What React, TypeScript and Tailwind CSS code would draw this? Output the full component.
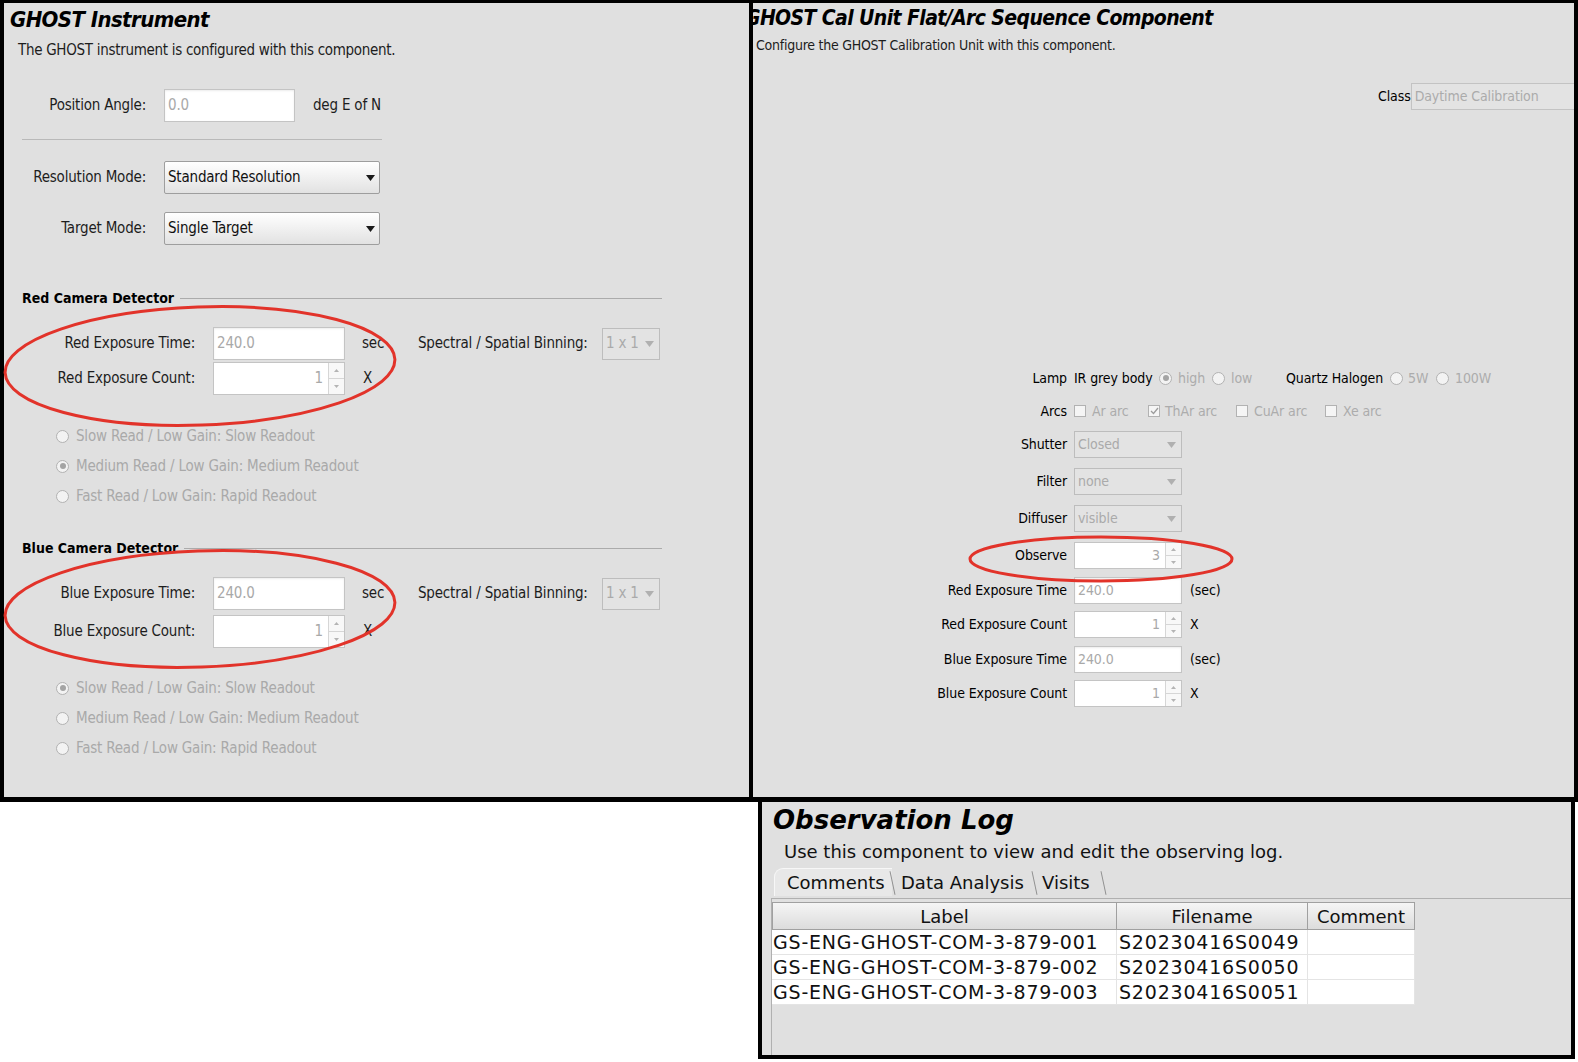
import React from "react";

const NARROW = "font-['DejaVu_Sans_Condensed','Liberation_Sans_Narrow','Liberation_Sans',sans-serif]";
const DEJAVU = "font-['DejaVu_Sans','Liberation_Sans',sans-serif]";

function Tri({ color }: { color: string }) {
  return (
    <svg width="9" height="6" viewBox="0 0 9 6">
      <path d="M0 0h9L4.5 6z" fill={color} />
    </svg>
  );
}

function TextBox({ value, className }: { value: string; className: string }) {
  return (
    <div
      className={`flex items-center bg-white border border-[#c4c4c4] shadow-[inset_0_1px_2px_rgba(0,0,0,0.08)] pl-[3px] text-[#a9a9a9] ${className}`}
    >
      {value}
    </div>
  );
}

function Spinner({ value, className }: { value: string; className: string }) {
  return (
    <div className={`flex bg-white border border-[#c4c4c4] ${className}`}>
      <div className="flex-1 flex items-center justify-end pr-[5px] text-[#a9a9a9]">{value}</div>
      <div className="w-[16px] flex flex-col border-l border-[#d6d6d6]">
        <div className="flex-1 flex items-center justify-center border-b border-[#d6d6d6] bg-[#f8f8f8]">
          <svg width="5" height="3" viewBox="0 0 5 3">
            <path d="M0 3h5L2.5 0z" fill="#b4b4b4" />
          </svg>
        </div>
        <div className="flex-1 flex items-center justify-center bg-[#f8f8f8]">
          <svg width="5" height="3" viewBox="0 0 5 3">
            <path d="M0 0h5L2.5 3z" fill="#b4b4b4" />
          </svg>
        </div>
      </div>
    </div>
  );
}

function Select({ value, className }: { value: string; className: string }) {
  return (
    <div
      className={`flex items-center justify-between border border-[#9e9e9e] rounded-[2px] bg-linear-to-b from-white to-[#e2e2e2] pl-[3px] pr-[4px] text-[#111] whitespace-nowrap ${className}`}
    >
      <span>{value}</span>
      <Tri color="#1a1a1a" />
    </div>
  );
}

function DimSelect({ value, className }: { value: string; className: string }) {
  return (
    <div
      className={`flex items-center justify-between border border-[#bdbdbd] bg-[#e3e3e3] pl-[3px] pr-[5px] text-[#aaaaaa] whitespace-nowrap ${className}`}
    >
      <span>{value}</span>
      <Tri color="#b0b0b0" />
    </div>
  );
}

function Radio({ on = false }: { on?: boolean }) {
  return (
    <span className="w-[13px] h-[13px] shrink-0 rounded-full border border-[#b2b2b2] bg-[#f3f3f3] flex items-center justify-center">
      {on && <span className="w-[6px] h-[6px] rounded-full bg-[#a4a4a4]" />}
    </span>
  );
}

function Check({ on = false }: { on?: boolean }) {
  return (
    <span className="w-[12px] h-[12px] shrink-0 border border-[#b2b2b2] bg-[#f5f5f5] flex items-center justify-center">
      {on && (
        <svg width="9" height="8" viewBox="0 0 9 8">
          <path d="M1 4l2.5 2.5L8 1" stroke="#9c9c9c" strokeWidth="1.3" fill="none" />
        </svg>
      )}
    </span>
  );
}

const readouts = [
  "Slow Read / Low Gain: Slow Readout",
  "Medium Read / Low Gain: Medium Readout",
  "Fast Read / Low Gain: Rapid Readout",
];

function Camera({ color, sel, top, gap, radios }: { color: string; sel: number; top: string; gap: string; radios: string }) {
  return (
    <>
      <div className={`${top} h-[20px] flex items-center pl-[18px]`}>
        <span className="text-[14px] font-bold text-black whitespace-nowrap tracking-normal">{color} Camera Detector</span>
        <div className="ml-[6px] mr-[87px] flex-1 h-px bg-[#ababab]" />
      </div>
      <div className="mt-[19px] h-[33px] flex items-center whitespace-nowrap">
        <span className="w-[191px] text-right">{color} Exposure Time:</span>
        <TextBox value="240.0" className="ml-[18px] w-[132px] h-[33px]" />
        <span className="ml-[17px] w-[56px]">sec</span>
        <span className="w-[184px]">Spectral / Spatial Binning:</span>
        <DimSelect value="1 x 1" className="w-[58px] h-[32px]" />
      </div>
      <div className={`${gap} h-[33px] flex items-center whitespace-nowrap`}>
        <span className="w-[191px] text-right">{color} Exposure Count:</span>
        <Spinner value="1" className="ml-[18px] w-[132px] h-[33px]" />
        <span className="ml-[18px]">X</span>
      </div>
      <div className={`${radios} flex flex-col`}>
        {readouts.map((r, i) => (
          <div key={r} className="h-[30px] flex items-center pl-[52px] text-[#a9a9a9] whitespace-nowrap">
            <Radio on={i === sel} />
            <span className="ml-[7px]">{r}</span>
          </div>
        ))}
      </div>
    </>
  );
}

function LeftPanel() {
  return (
    <div
      className={`${NARROW} w-[753px] h-[802px] shrink-0 border-l-4 border-r-4 border-t-[3px] border-b-[5px] border-black bg-[#e0e0e0] flex flex-col text-[15px] tracking-[-0.2px] text-[#1d1d1d] overflow-hidden`}
    >
      <div className="h-[33px] leading-[33px] pl-[6px] text-[22px] tracking-[-0.6px] font-bold italic text-black">
        GHOST Instrument
      </div>
      <div className="h-[28px] leading-[28px] pl-[14px] tracking-[-0.3px] whitespace-nowrap">
        The GHOST instrument is configured with this component.
      </div>
      <div className="mt-[25px] h-[33px] flex items-center whitespace-nowrap">
        <span className="w-[142px] text-right">Position Angle:</span>
        <TextBox value="0.0" className="ml-[18px] w-[131px] h-[33px]" />
        <span className="ml-[18px]">deg E of N</span>
      </div>
      <div className="mt-[17px] ml-[18px] w-[360px] h-px bg-[#b9b9b9]" />
      <div className="mt-[21px] h-[33px] flex items-center whitespace-nowrap">
        <span className="w-[142px] text-right">Resolution Mode:</span>
        <Select value="Standard Resolution" className="ml-[18px] w-[216px] h-[33px]" />
      </div>
      <div className="mt-[18px] h-[33px] flex items-center whitespace-nowrap">
        <span className="w-[142px] text-right">Target Mode:</span>
        <Select value="Single Target" className="ml-[18px] w-[216px] h-[33px]" />
      </div>
      <Camera color="Red" sel={1} top="mt-[43px]" gap="mt-[2px]" radios="mt-[26px]" />
      <Camera color="Blue" sel={0} top="mt-[27px]" gap="mt-[5px]" radios="mt-[25px]" />
    </div>
  );
}

function FormRow({ label, top, children }: { label: string; top: string; children: React.ReactNode }) {
  return (
    <div className={`${top} flex items-center ml-[184px] whitespace-nowrap`}>
      <span className="w-[130px] text-right text-black">{label}</span>
      <div className="ml-[7px] flex items-center">{children}</div>
    </div>
  );
}

function RightPanel() {
  return (
    <div
      className={`${NARROW} w-[825px] h-[802px] shrink-0 border-r-4 border-t-[3px] border-b-[5px] border-black bg-[#e0e0e0] flex flex-col text-[14px] tracking-[-0.1px] text-[#1d1d1d] overflow-hidden`}
    >
      <div className="h-[30px] leading-[30px] -ml-[8px] text-[21px] tracking-[-0.6px] font-bold italic text-black whitespace-nowrap">
        GHOST Cal Unit Flat/Arc Sequence Component
      </div>
      <div className="h-[24px] leading-[24px] pl-[3px] text-[14px] tracking-[-0.25px] whitespace-nowrap">
        Configure the GHOST Calibration Unit with this component.
      </div>
      <div className="mt-[26px] h-[27px] flex items-center ml-[625px]">
        <span className="w-[41px] text-black">Class</span>
        <div className="w-[200px] h-[27px] shrink-0 flex items-center border border-[#c3c3c3] bg-[#e3e3e3] pl-[3px] text-[#ababab] whitespace-nowrap">
          Daytime Calibration
        </div>
      </div>

      <FormRow label="Lamp" top="mt-[258px] h-[20px]">
        <span className="w-[85px] text-black">IR grey body</span>
        <Radio on />
        <span className="ml-[6px] w-[34px] text-[#acacac]">high</span>
        <Radio />
        <span className="ml-[6px] w-[55px] text-[#acacac]">low</span>
        <span className="w-[104px] text-black">Quartz Halogen</span>
        <Radio />
        <span className="ml-[5px] w-[28px] text-[#acacac]">5W</span>
        <Radio />
        <span className="ml-[6px] text-[#acacac]">100W</span>
      </FormRow>
      <FormRow label="Arcs" top="mt-[13px] h-[20px]">
        <Check />
        <span className="ml-[6px] w-[56px] text-[#acacac]">Ar arc</span>
        <Check on />
        <span className="ml-[5px] w-[71px] text-[#acacac]">ThAr arc</span>
        <Check />
        <span className="ml-[6px] w-[71px] text-[#acacac]">CuAr arc</span>
        <Check />
        <span className="ml-[6px] text-[#acacac]">Xe arc</span>
      </FormRow>
      <FormRow label="Shutter" top="mt-[10px] h-[27px]">
        <DimSelect value="Closed" className="w-[108px] h-[27px]" />
      </FormRow>
      <FormRow label="Filter" top="mt-[10px] h-[27px]">
        <DimSelect value="none" className="w-[108px] h-[27px]" />
      </FormRow>
      <FormRow label="Diffuser" top="mt-[10px] h-[27px]">
        <DimSelect value="visible" className="w-[108px] h-[27px]" />
      </FormRow>
      <FormRow label="Observe" top="mt-[10px] h-[27px]">
        <Spinner value="3" className="w-[108px] h-[27px]" />
      </FormRow>
      <FormRow label="Red Exposure Time" top="mt-[8px] h-[27px]">
        <TextBox value="240.0" className="w-[108px] h-[27px]" />
        <span className="ml-[8px] text-black">(sec)</span>
      </FormRow>
      <FormRow label="Red Exposure Count" top="mt-[7px] h-[27px]">
        <Spinner value="1" className="w-[108px] h-[27px]" />
        <span className="ml-[8px] text-black">X</span>
      </FormRow>
      <FormRow label="Blue Exposure Time" top="mt-[8px] h-[27px]">
        <TextBox value="240.0" className="w-[108px] h-[27px]" />
        <span className="ml-[8px] text-black">(sec)</span>
      </FormRow>
      <FormRow label="Blue Exposure Count" top="mt-[7px] h-[27px]">
        <Spinner value="1" className="w-[108px] h-[27px]" />
        <span className="ml-[8px] text-black">X</span>
      </FormRow>
    </div>
  );
}

const rows = [
  ["GS-ENG-GHOST-COM-3-879-001", "S20230416S0049"],
  ["GS-ENG-GHOST-COM-3-879-002", "S20230416S0050"],
  ["GS-ENG-GHOST-COM-3-879-003", "S20230416S0051"],
];

function Sep() {
  return <div className="self-end mb-[1px] h-[24px] w-px bg-[#8e8e8e] -rotate-12" />;
}

function ObsLog() {
  return (
    <div
      className={`${DEJAVU} w-[817px] h-[257px] shrink-0 border-l-4 border-r-4 border-b-4 border-black bg-[#e0e0e0] flex flex-col text-[#111]`}
    >
      <div className="mt-[4px] h-[28px] leading-[28px] pl-[11px] text-[26px] font-bold italic text-black">Observation Log</div>
      <div className="mt-[7px] h-[22px] leading-[22px] pl-[22px] text-[18px] whitespace-nowrap">
        Use this component to view and edit the observing log.
      </div>
      <div className="mt-[5px] h-[28px] flex items-end pl-[12px] text-[18px]">
        <div className="h-[28px] w-[118px] flex items-center pl-[12px] bg-[#e8e8e8] rounded-tl-[9px] border-l border-t border-[#f7f7f7]">
          Comments
        </div>
        <Sep />
        <div className="h-[27px] w-[141px] flex items-center pl-[8px] whitespace-nowrap">Data Analysis</div>
        <Sep />
        <div className="h-[27px] w-[68px] flex items-center pl-[7px]">Visits</div>
        <Sep />
      </div>
      <div className="ml-[9px] mt-[2px] flex-1 border-l border-t border-[#b0b0b0] pt-[3px] text-[19px] tracking-[0.8px]">
        <div className="grid grid-cols-[345px_191px_107px]">
          {["Label", "Filename", "Comment"].map((h) => (
            <div
              key={h}
              className="h-[28px] flex items-center justify-center border border-[#a0a0a0] -ml-px first:ml-0 bg-linear-to-b from-[#f5f5f5] to-[#dcdcdc] tracking-normal text-[18px]"
            >
              {h}
            </div>
          ))}
          {rows.map(([label, file]) => (
            <React.Fragment key={label}>
              <div className="h-[25px] flex items-center pl-[1px] bg-white border-b border-r border-[#e4e4e4] whitespace-nowrap overflow-hidden">
                {label}
              </div>
              <div className="h-[25px] flex items-center pl-[2px] bg-white border-b border-r border-[#e4e4e4] whitespace-nowrap overflow-hidden">
                {file}
              </div>
              <div className="h-[25px] bg-white border-b border-r border-[#e4e4e4]" />
            </React.Fragment>
          ))}
        </div>
      </div>
    </div>
  );
}

export default function App() {
  return (
    <div className="relative w-[1578px] h-[1062px] bg-white overflow-hidden">
      <div className="flex">
        <LeftPanel />
        <RightPanel />
      </div>
      <div className="flex">
        <div className="w-[758px] shrink-0" />
        <ObsLog />
      </div>
      <svg className="pointer-events-none absolute left-0 top-0" width="1578" height="1062">
        <ellipse cx="200" cy="366" rx="195" ry="59" transform="rotate(-2 200 366)" fill="none" stroke="#e2332a" strokeWidth="3" />
        <ellipse cx="200" cy="609" rx="195" ry="58" transform="rotate(-2 200 609)" fill="none" stroke="#e2332a" strokeWidth="3" />
        <ellipse cx="1101" cy="559" rx="131" ry="22" fill="none" stroke="#e2332a" strokeWidth="3" />
      </svg>
    </div>
  );
}
